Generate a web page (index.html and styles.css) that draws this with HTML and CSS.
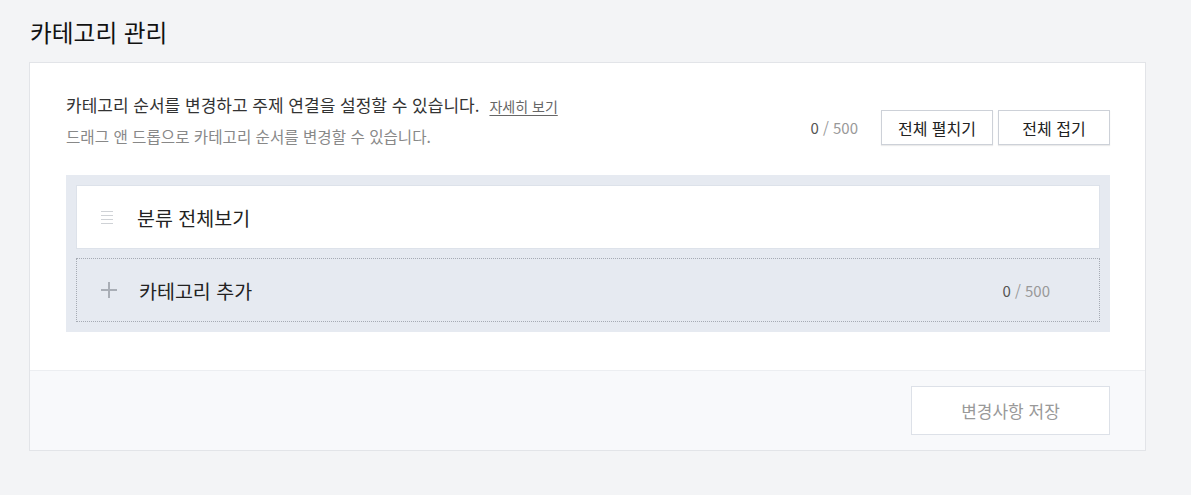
FILE: index.html
```html
<!DOCTYPE html>
<html lang="ko">
<head>
<meta charset="utf-8">
<link rel="stylesheet" href="styles.css">
</head>
<body>
<div class="page">
  <h1 class="title">카테고리 관리</h1>
  <div class="card">
    <div class="card-body">
      <div class="head">
        <div class="desc">
          <p class="desc-main">카테고리 순서를 변경하고 주제 연결을 설정할 수 있습니다.<a class="more" href="#">자세히 보기</a></p>
          <p class="desc-sub">드래그 앤 드롭으로 카테고리 순서를 변경할 수 있습니다.</p>
        </div>
        <div class="tools">
          <span class="count"><b>0</b> / 500</span>
          <button class="btn">전체 펼치기</button>
          <button class="btn">전체 접기</button>
        </div>
      </div>
      <div class="list">
        <div class="item">
          <span class="drag">
            <svg width="12" height="14" viewBox="0 0 12 14"><rect x="0" y="1" width="12" height="1" fill="#cfd2d6"/><rect x="0" y="5" width="12" height="1" fill="#cfd2d6"/><rect x="0" y="9" width="12" height="1" fill="#cfd2d6"/><rect x="0" y="13" width="12" height="1" fill="#cfd2d6"/></svg>
          </span>
          <span class="item-name">분류 전체보기</span>
        </div>
        <div class="item add">
          <span class="plus">
            <svg width="16" height="16" viewBox="0 0 16 16"><rect x="7" y="0" width="2" height="16" fill="#a9aeb6"/><rect x="0" y="7" width="16" height="2" fill="#a9aeb6"/></svg>
          </span>
          <span class="item-name">카테고리 추가</span>
          <span class="count add-count"><b>0</b> / 500</span>
        </div>
      </div>
    </div>
    <div class="card-foot">
      <button class="save">변경사항 저장</button>
    </div>
  </div>
</div>
</body>
</html>
```
FILE: styles.css
```css
* { box-sizing: border-box; }
html, body { margin: 0; padding: 0; }
body {
  background: #f3f4f6;
  font-family: "Noto Sans CJK KR", "Noto Sans", sans-serif;
  color: #222;
}
.page { padding: 14px 46px 0 29px; width: 1191px; }
.title {
  margin: 0 0 0 1px;
  font-size: 23.7px;
  font-weight: 400;
  line-height: 36px;
  height: 48px;
  color: #111;
}
.card {
  width: 1117px;
  background: #fff;
  border: 1px solid #e2e4e8;
}
.card-body { padding: 27px 35px 38px 36px; }
.head { display: flex; align-items: flex-end; justify-content: space-between; margin-bottom: 24px; }
.desc p { margin: 0; }
.desc-main { font-size: 17px; line-height: 30px; color: #333; }
.more { margin-left: 10px; font-size: 14px; color: #666; text-decoration: underline; text-underline-offset: 3px; }
.desc-sub { font-size: 15.6px; line-height: 30px; color: #888; }
.tools { display: flex; align-items: center; gap: 5px; margin-bottom: 6px; }
.count { font-size: 15px; color: #999; }
.count b { font-weight: 400; color: #555; }
.tools .count { margin-right: 18px; }
.btn {
  width: 112px; height: 35px;
  background: #fff;
  border: 1px solid #cdd1d8;
  box-shadow: 0 1px 1px rgba(0,0,0,0.08);
  font-family: inherit; font-size: 16px; color: #222;
  padding: 0;
}
.list { background: #e6eaf1; padding: 10px; display: flex; flex-direction: column; gap: 9px; }
.item {
  display: flex; align-items: center;
  height: 64px;
  background: #fff;
  border: 1px solid #dde2ea;
  padding-left: 24px;
}
.drag { display: flex; width: 36px; }
.item-name { font-size: 19.5px; color: #222; }
.item.add { background: #e6eaf1; border: 1px dotted #a6abb4; }
.plus { display: flex; width: 38px; }
.add-count { margin-left: auto; margin-right: 49px; }
.card-foot {
  border-top: 1px solid #eceef1;
  background: #f8f9fb;
  height: 80px;
  display: flex; justify-content: flex-end; align-items: flex-start;
  padding: 15px 35px 0 0;
}
.save {
  width: 199px; height: 49px;
  background: #fff;
  border: 1px solid #dde1e8;
  font-family: inherit; font-size: 17px; color: #999;
}
```
